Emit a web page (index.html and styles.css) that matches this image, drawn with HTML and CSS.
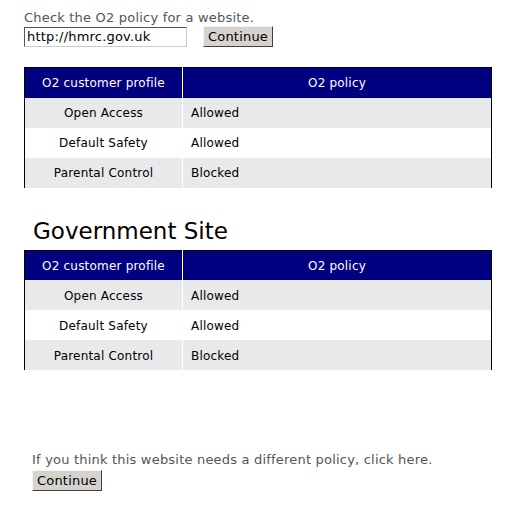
FILE: index.html
```
<!DOCTYPE html>
<html lang="en">
<head>
  <meta charset="UTF-8">
  <title>O2 policy check</title>
  <link rel="stylesheet" href="styles.css">
</head>
<body>
  <div class="page">
    <!-- lookup form -->
    <div class="lookup">
      <p class="intro">Check the O2 policy for a website.</p>
      <div class="lookup-row">
        <input class="url-input" type="text" value="http://hmrc.gov.uk">
        <button class="btn">Continue</button>
      </div>
    </div>

    <table class="policy">
      <tr><th class="col-profile">O2 customer profile</th><th>O2 policy</th></tr>
      <tr class="shade"><td class="profile">Open Access</td><td>Allowed</td></tr>
      <tr><td class="profile">Default Safety</td><td>Allowed</td></tr>
      <tr class="shade"><td class="profile">Parental Control</td><td>Blocked</td></tr>
    </table>

    <h2 class="site-type">Government Site</h2>

    <table class="policy">
      <tr><th class="col-profile">O2 customer profile</th><th>O2 policy</th></tr>
      <tr class="shade"><td class="profile">Open Access</td><td>Allowed</td></tr>
      <tr><td class="profile">Default Safety</td><td>Allowed</td></tr>
      <tr class="shade"><td class="profile">Parental Control</td><td>Blocked</td></tr>
    </table>

    <!-- request a change -->
    <div class="change">
      <p class="intro">If you think this website needs a different policy, click here.</p>
      <button class="btn">Continue</button>
    </div>
  </div>
</body>
</html>
```

FILE: styles.css
```
* { box-sizing: border-box; margin: 0; padding: 0; }

body {
  font-family: 'DejaVu Sans', Verdana, sans-serif;
  font-size: 13px;
  letter-spacing: 0.2px;
  color: #000;
  background: #fff;
}

.page {
  padding: 10px 20px 0 24px;
}

.intro {
  color: #555;
  line-height: 15px;
}

.lookup-row {
  display: flex;
  align-items: center;
  gap: 16px;
  margin-top: 1px;
}

.url-input {
  width: 163px;
  height: 20px;
  padding: 0 2px;
  font-family: 'DejaVu Sans', Verdana, sans-serif;
  font-size: 13px;
  letter-spacing: 0.2px;
  color: #000;
  border: 1px solid;
  border-color: #555 #ccc #ccc #555;
  background: #fff;
}

.btn {
  height: 21px;
  padding: 0 4px;
  font-family: 'DejaVu Sans', Verdana, sans-serif;
  font-size: 13px;
  letter-spacing: 0.2px;
  color: #000;
  background: #d6d3ce;
  border: 1px solid;
  border-color: #f4f4f4 #404040 #404040 #f4f4f4;
}

.policy {
  width: 468px;
  margin-top: 20px;
  border-collapse: collapse;
  border-left: 1px solid #000;
  border-right: 1px solid #000;
  font-size: 12px;
}

.policy th,
.policy td {
  height: 30px;
  padding: 1px 8px 0;
  font-weight: normal;
  text-align: left;
}

.policy th {
  background: #000080;
  color: #fff;
  text-align: center;
  border-top: 1px solid #000;
}

.policy .col-profile,
.policy .profile {
  width: 158px;
  text-align: center;
  border-right: 1px solid #fff;
}

.policy .shade td {
  background-color: #eaeaea;
  background-image: radial-gradient(circle, #dde4e8 0.6px, transparent 0.8px);
  background-size: 4px 4px;
}

.site-type {
  margin: 29px 0 0 9px;
  font-size: 23px;
  font-weight: normal;
  letter-spacing: 0;
  line-height: 28px;
}

.site-type + .policy {
  margin-top: 5px;
}

.change {
  margin: 82px 0 0 8px;
}

.change .btn {
  margin-top: 3px;
}
```
